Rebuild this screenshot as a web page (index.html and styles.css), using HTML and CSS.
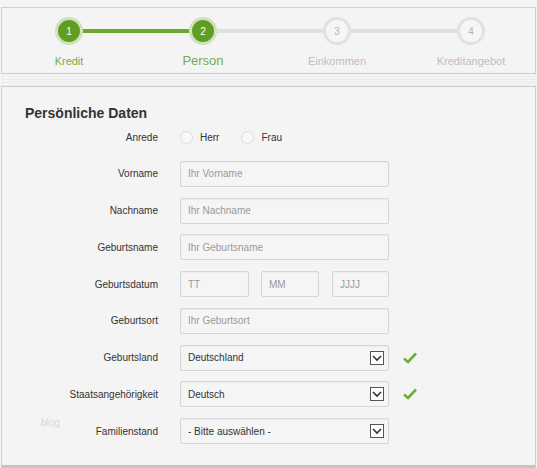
FILE: index.html
```html
<!DOCTYPE html>
<html lang="de">
<head>
<meta charset="utf-8">
<title>Persönliche Daten</title>
<link rel="stylesheet" href="styles.css">
</head>
<body>
<div class="frame">
  <div class="topgap"></div>
  <ol class="stepper">
    <li class="step done"><span class="dot">1</span><span class="label">Kredit</span></li>
    <li class="step current"><span class="dot">2</span><span class="label">Person</span></li>
    <li class="step"><span class="dot">3</span><span class="label">Einkommen</span></li>
    <li class="step"><span class="dot">4</span><span class="label">Kreditangebot</span></li>
  </ol>
  <div class="band"></div>
  <form class="panel">
    <h2 class="title">Persönliche Daten</h2>
    <div class="row">
      <span class="lbl">Anrede</span>
      <div class="radios">
        <label class="radio"><span class="circle"></span>Herr</label>
        <label class="radio"><span class="circle"></span>Frau</label>
      </div>
    </div>
    <div class="row"><span class="lbl">Vorname</span><div class="field ph">Ihr Vorname</div></div>
    <div class="row"><span class="lbl">Nachname</span><div class="field ph">Ihr Nachname</div></div>
    <div class="row"><span class="lbl">Geburtsname</span><div class="field ph">Ihr Geburtsname</div></div>
    <div class="row">
      <span class="lbl">Geburtsdatum</span>
      <div class="date">
        <div class="field ph dd">TT</div>
        <div class="field ph mm">MM</div>
        <div class="field ph yy">JJJJ</div>
      </div>
    </div>
    <div class="row"><span class="lbl">Geburtsort</span><div class="field ph">Ihr Geburtsort</div></div>
    <div class="row">
      <span class="lbl">Geburtsland</span>
      <div class="field sel">Deutschland<span class="arrow"><svg viewBox="0 0 14 14" width="14" height="14"><rect x="0.5" y="0.5" width="13" height="13" fill="#fff" stroke="#555"/><path d="M3 5 L7 9 L11 5" fill="none" stroke="#333" stroke-width="1.6"/></svg></span></div>
      <svg class="ok" viewBox="0 0 14 12" width="14" height="12"><path d="M1 6.5 L5 10 L13 1.5" fill="none" stroke="#6fae3c" stroke-width="2.6"/></svg>
    </div>
    <div class="row">
      <span class="lbl">Staatsangehörigkeit</span>
      <div class="field sel">Deutsch<span class="arrow"><svg viewBox="0 0 14 14" width="14" height="14"><rect x="0.5" y="0.5" width="13" height="13" fill="#fff" stroke="#555"/><path d="M3 5 L7 9 L11 5" fill="none" stroke="#333" stroke-width="1.6"/></svg></span></div>
      <svg class="ok" viewBox="0 0 14 12" width="14" height="12"><path d="M1 6.5 L5 10 L13 1.5" fill="none" stroke="#6fae3c" stroke-width="2.6"/></svg>
    </div>
    <div class="row">
      <span class="lbl">Familienstand</span>
      <div class="field sel">- Bitte auswählen -<span class="arrow"><svg viewBox="0 0 14 14" width="14" height="14"><rect x="0.5" y="0.5" width="13" height="13" fill="#fff" stroke="#555"/><path d="M3 5 L7 9 L11 5" fill="none" stroke="#333" stroke-width="1.6"/></svg></span></div>
    </div>
    <span class="watermark">blog</span>
  </form>
</div>
</body>
</html>
```
FILE: styles.css
```css
* { box-sizing: border-box; }
html, body { margin: 0; padding: 0; background: #f4f4f4; }
body { font-family: "Liberation Sans", Arial, sans-serif; color: #333; }

.frame {
  margin-left: 1px;
  width: 535px;
  height: 468px;
  border-left: 1px solid #cfcfcf;
  border-right: 1px solid #cfcfcf;
  border-bottom: 3px solid #c4c4c4;
  background: #f4f4f4;
  display: flex;
  flex-direction: column;
}
.topgap { flex: none; height: 8px; border-bottom: 1px solid #d0d0d0; margin-left: -1px; margin-right: -1px; background: #f4f4f4; }

.stepper {
  flex: none;
  list-style: none;
  margin: 0;
  padding: 0;
  height: 65px;
  display: grid;
  grid-template-columns: repeat(4, 134px);
}
.step {
  position: relative;
  display: flex;
  flex-direction: column;
  align-items: center;
  padding-top: 9px;
}
.step + .step::before {
  content: "";
  position: absolute;
  top: 21px;
  left: -50%;
  width: 100%;
  height: 4px;
  background: #e0e0e0;
}
.step.current::before { background: #6aa72e; }
.dot {
  position: relative;
  z-index: 1;
  width: 28px;
  height: 28px;
  border-radius: 50%;
  border: 3px solid #e1e1e1;
  background: #f6f6f6;
  color: #b5b5b5;
  font-size: 10px;
  display: flex;
  align-items: center;
  justify-content: center;
}
.step.done .dot, .step.current .dot {
  border-color: #cfe2bb;
  background: #5f9e22;
  color: #fff;
}
.label {
  margin-top: 10px;
  font-size: 11px;
  color: #bdbdbd;
}
.step.done .label { color: #7aa94e; }
.step.current .label { color: #7aa94e; font-size: 13px; margin-top: 8px; }

.band {
  flex: none;
  height: 14px;
  border-top: 1px solid #cdcdcd;
  border-bottom: 1px solid #cdcdcd;
  margin-left: -1px;
  margin-right: -1px;
  background: repeating-linear-gradient(to bottom, #f4f4f4 0, #f4f4f4 2px, #ebebeb 2px, #ebebeb 3px);
}

.panel {
  position: relative;
  flex: 1;
  padding-top: 18px;
}
.title {
  margin: 0 0 2px 23px;
  font-size: 14px;
  line-height: 17px;
  font-weight: bold;
  color: #333;
}
.row {
  display: grid;
  grid-template-columns: 156px 209px 14px;
  column-gap: 22px;
  align-items: center;
  height: 26px;
  margin-bottom: 10.75px;
}
.lbl {
  text-align: right;
  font-size: 10px;
  color: #333;
}
.radios { display: flex; gap: 22px; align-items: center; }
.radio { display: flex; align-items: center; font-size: 10px; color: #333; }
.circle {
  width: 13px;
  height: 13px;
  border-radius: 50%;
  border: 1px solid #dcdcdc;
  background: #f8f8f8;
  margin: 0 7px 0 0;
}
.field {
  height: 26px;
  border: 1px solid #d6d6d6;
  border-radius: 2px;
  background: #f5f5f5;
  box-shadow: inset 0 1px 1px rgba(0,0,0,0.04);
  font-size: 10px;
  display: flex;
  align-items: center;
  padding-left: 7px;
  color: #333;
}
.field.ph { color: #9a9a9a; }
.date { display: flex; gap: 12px; }
.date .dd { width: 69px; }
.date .mm { width: 58px; }
.date .yy { width: 57px; margin-left: 1px; }
.sel { justify-content: space-between; padding-right: 4px; }
.arrow { display: flex; }
.ok { display: block; margin-left: -8px; }

.watermark {
  position: absolute;
  left: 39px;
  top: 330px;
  font-size: 10px;
  color: #d9d9d9;
}
```
